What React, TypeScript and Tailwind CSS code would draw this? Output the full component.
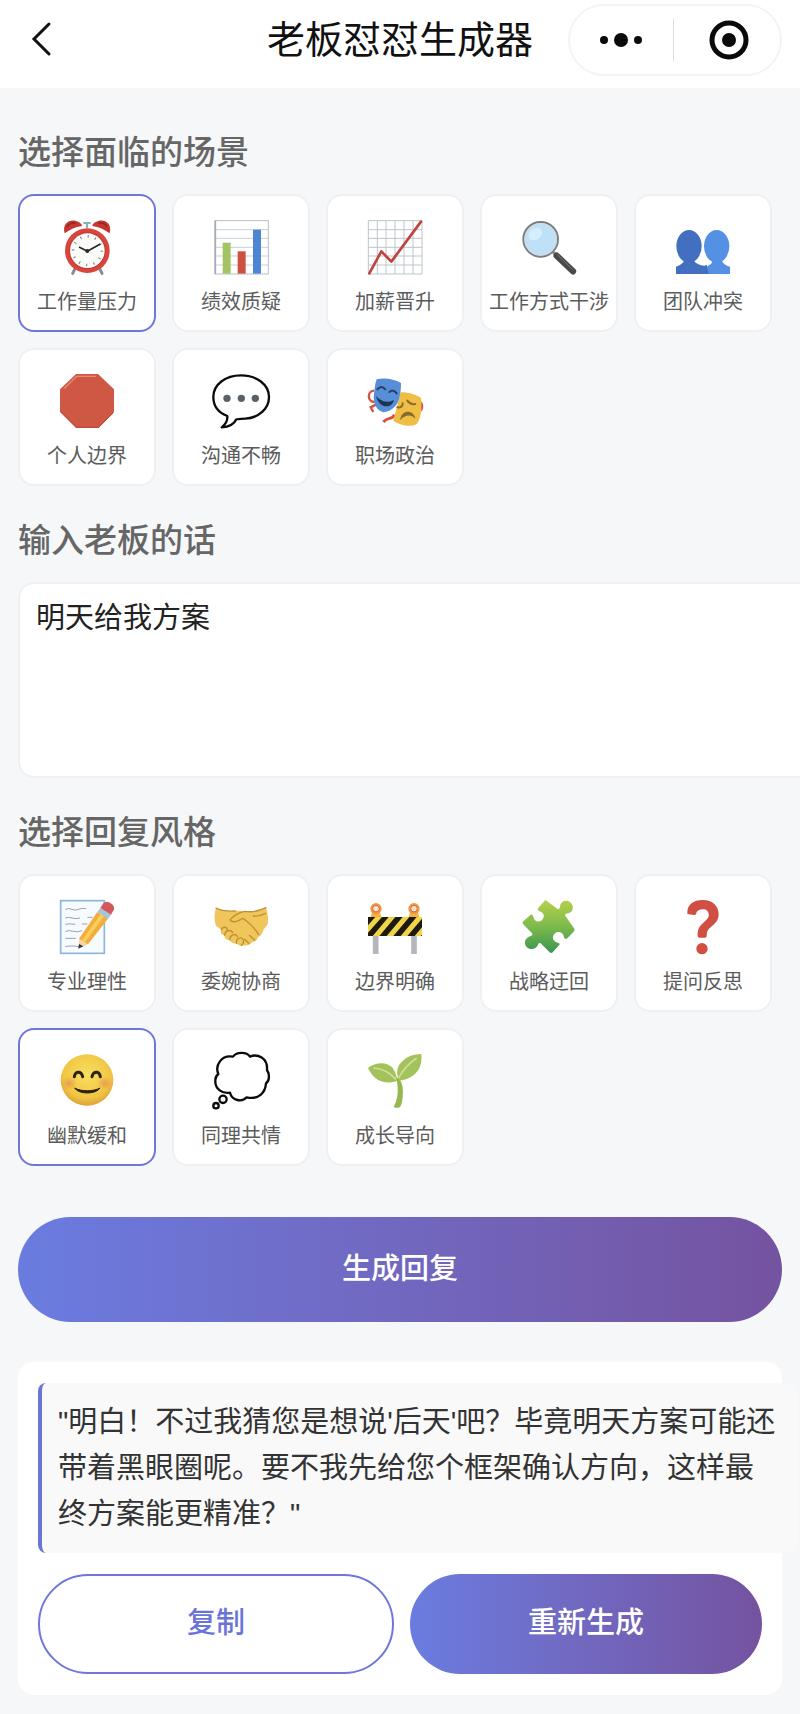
import React, { useState } from 'react';

const AlarmClock = () => (
  <>
    <path d="M47 142 L38 160 M117 142 L126 160" stroke="#7d909b" strokeWidth="9" strokeLinecap="round" />
    <path d="M70 9 H92 M81 9 V24" stroke="#7fb9ad" strokeWidth="6" />
    <path d="M14 40 C6 12 26 -2 46 2 C58 5 66 12 66 18 C46 20 30 29 14 40 Z" fill="#c8352e" />
    <path d="M149 40 C157 12 137 -2 117 2 C105 5 97 12 97 18 C117 20 133 29 149 40 Z" fill="#c8352e" />
    <path d="M22 22 C26 10 38 6 48 10" stroke="#8f2a2a" strokeWidth="5" fill="none" />
    <path d="M141 22 C137 10 125 6 115 10" stroke="#8f2a2a" strokeWidth="5" fill="none" />
    <circle cx="82" cy="92" r="67" fill="#d9453c" />
    <circle cx="82" cy="92" r="55" fill="#b93a33" />
    <circle cx="82" cy="92" r="52" fill="#fbfcfa" />
    <circle cx="82" cy="92" r="43" fill="none" stroke="#75807a" strokeWidth="8" strokeDasharray="3 19.5" />
    <path d="M57 81 L82 94 L121 72" stroke="#26292b" strokeWidth="5" fill="none" strokeLinejoin="round" />
    <circle cx="82" cy="93" r="6" fill="#26292b" />
  </>
);

const BarChart = () => (
  <>
    <rect x="3" y="2" width="160" height="160" fill="#fff" stroke="#b7bfc6" strokeWidth="3" />
    <path d="M3 29 H163 M3 55 H163 M3 82 H163 M3 108 H163 M3 135 H163" stroke="#c9d0d8" strokeWidth="3" />
    <path d="M4 2 V162" stroke="#a6adb3" strokeWidth="5" />
    <rect x="26" y="68" width="24" height="93" fill="#a3c465" />
    <rect x="71" y="94" width="24" height="67" fill="#cd5142" />
    <rect x="117" y="29" width="24" height="132" fill="#4b85d3" />
  </>
);

const RisingChart = () => (
  <>
    <path
      d="M1 2 V162 M28 2 V162 M54 2 V162 M81 2 V162 M108 2 V162 M135 2 V162 M162 2 V162 M1 2 H162 M1 29 H162 M1 55 H162 M1 82 H162 M1 108 H162 M1 135 H162 M1 162 H162"
      stroke="#bcc6cb"
      strokeWidth="3"
    />
    <path d="M4 160 L40 94 L70 125 L159 5" stroke="#bf4440" strokeWidth="8" fill="none" strokeLinejoin="round" strokeLinecap="round" />
  </>
);

const Magnifier = () => (
  <>
    <path d="M92 95 L106 109" stroke="#8a8f93" strokeWidth="9" />
    <path d="M104 107 L153 154" stroke="#4a4a4a" strokeWidth="19" strokeLinecap="round" />
    <path d="M106 104 L152 149" stroke="#777" strokeWidth="3" />
    <circle cx="56" cy="58" r="52" fill="#bfe1f8" stroke="#777f85" strokeWidth="6" />
    <circle cx="56" cy="58" r="47" fill="none" stroke="#d5dadd" strokeWidth="4" />
    <ellipse cx="40" cy="42" rx="22" ry="17" fill="#d6edfc" transform="rotate(-35 40 42)" />
  </>
);

const Busts = () => (
  <>
    <path d="M0 162 V140 Q20 132 24 122 H54 Q60 134 88 138 V162 Z" fill="#426fc0" />
    <ellipse cx="39" cy="79" rx="38" ry="49" fill="#426fc0" />
    <path d="M88 162 Q92 138 98 136 Q108 132 110 122 H138 Q142 134 162 140 V162 Z" fill="#5490e4" />
    <path d="M74 162 Q78 138 92 134 L98 162 Z" fill="#426fc0" />
    <ellipse cx="122" cy="79" rx="38" ry="49" fill="#5490e4" />
  </>
);

const StopSign = () => (
  <>
    <polygon points="48,0 114,0 162,46 162,114 116,162 48,162 0,114 0,46" fill="#cf5844" />
    <path d="M12 44 L50 7 H108" stroke="#e58c7c" strokeWidth="4" fill="none" />
    <path d="M3 114 L49 160 H116 L160 116" stroke="#b9493a" strokeWidth="3" fill="none" />
    <path d="M54 134 H108" stroke="#c0603f" strokeWidth="6" strokeDasharray="10 4" />
  </>
);

const Speech = () => (
  <>
    <path
      d="M81 4 C128 4 165 32 165 69 C165 106 132 132 94 134 C80 135 68 134 66 137 C60 151 44 158 23 160 C35 151 41 139 40 126 C14 116 -2 96 -2 69 C-2 32 34 4 81 4 Z"
      fill="#fff"
      stroke="#0b0b0b"
      strokeWidth="7"
      strokeLinejoin="round"
    />
    <circle cx="39" cy="73" r="11" fill="#596169" />
    <circle cx="82" cy="73" r="11" fill="#596169" />
    <circle cx="124" cy="73" r="11" fill="#596169" />
  </>
);

const Masks = () => (
  <>
    <path d="M18 50 C-4 52 -2 84 20 84 M24 92 L8 100 L16 114" stroke="#d8513f" strokeWidth="7" fill="none" />
    <path d="M150 82 C166 86 164 110 150 112 M80 122 C70 140 62 126 46 144" stroke="#d8513f" strokeWidth="9" fill="none" />
    <path d="M98 55 C120 54 146 62 159 72 C163 104 158 136 146 150 C128 162 92 152 76 140 Z" fill="#efbf45" />
    <path d="M118 80 q10 14 24 10 M88 100 q16 2 16 -12" stroke="#8d6c2b" strokeWidth="6" fill="none" strokeLinecap="round" />
    <path d="M96 138 C102 104 138 108 142 134 C128 120 112 122 96 138 Z" fill="#8a6a2c" />
    <path d="M26 16 C48 10 78 14 99 27 C99 56 94 88 80 98 C70 108 58 114 46 115 C26 108 14 90 18 60 C20 42 22 26 26 16 Z" fill="#568fd8" />
    <path d="M28 46 q12 -14 24 0 M64 54 q12 -10 22 4" stroke="#263e66" strokeWidth="6" fill="none" strokeLinecap="round" />
    <path d="M24 66 C38 84 62 88 78 78 C72 106 32 104 24 66 Z" fill="#1e3355" />
  </>
);

const Memo = () => (
  <>
    <rect x="2" y="2" width="131" height="158" fill="#f8fbfe" stroke="#8bb6de" strokeWidth="5" />
    <path
      d="M16 28 q10 -5 20 0 t20 0 t22 -2 M16 54 q10 -4 20 0 t24 0 M82 52 h16 M16 73 q12 -3 30 0 M66 72 h16 M16 94 q12 -4 24 0 t26 -2 M16 115 h32 M16 140 q14 -4 42 0"
      stroke="#93a3b4"
      strokeWidth="3"
      fill="none"
    />
    <path d="M57 116 L84 132 L56 145 Z" fill="#f3d6a0" />
    <path d="M57 132 L70 139 L55 146 Z" fill="#333" />
    <path d="M57 116 L112 36 L144 56 L84 133 Z" fill="#f2ad3d" />
    <path d="M66 121 L122 43 L132 49 L75 127 Z" fill="#f9cf5b" />
    <path d="M112 36 L121 24 L153 44 L144 57 Z" fill="#a6c6d8" />
    <path d="M121 24 L130 10 Q138 2 150 8 Q164 16 162 28 L153 44 Z" fill="#d6575b" />
  </>
);

const Handshake = () => (
  <>
    <path
      d="M6 24 C24 34 44 34 60 33 C76 31 84 32 96 35 C116 38 138 32 156 23 C162 40 164 60 160 74 L148 90 C144 102 140 108 132 112 C128 122 122 126 114 126 C108 136 98 138 88 136 C80 140 72 136 68 130 C58 132 50 128 48 120 C38 122 30 114 32 106 C22 106 18 98 22 90 L5 76 C0 58 1 40 6 24 Z"
      fill="#f0c65a"
    />
    <path
      d="M6 24 C24 34 44 34 64 33 M156 23 C138 32 116 38 92 34 C74 38 56 50 48 60 C56 70 74 64 86 55 C100 62 122 84 134 104 M118 48 C132 50 146 44 154 40 M22 90 C26 78 40 80 40 90 M32 106 C32 92 50 86 56 98 M48 120 C46 104 66 98 70 110 M68 130 C64 114 84 108 88 120 C90 128 86 134 82 136 M92 118 L104 130 M106 106 L122 120"
      stroke="#bd9038"
      strokeWidth="4"
      fill="none"
      strokeLinecap="round"
    />
  </>
);

const Barrier = () => (
  <>
    <path d="M23 106 V162 M138 106 V162" stroke="#b4b6bb" strokeWidth="17" />
    <path d="M8 52 L12 36 H36 L40 52 Z M122 52 L126 36 H150 L154 52 Z" fill="#f4b340" />
    <circle cx="24" cy="26" r="17" fill="#ee9a3f" />
    <circle cx="24" cy="26" r="10" fill="#fbe0c8" stroke="#d9603b" strokeWidth="3" />
    <circle cx="138" cy="26" r="17" fill="#ee9a3f" />
    <circle cx="138" cy="26" r="10" fill="#fbe0c8" stroke="#d9603b" strokeWidth="3" />
    <rect x="0" y="51" width="162" height="57" fill="#1d1a12" />
    <path d="M0 76 L22 51 H42 L0 98 Z M14 108 L62 51 H82 L34 108 Z M56 108 L104 51 H124 L76 108 Z M98 108 L146 51 H162 V56 L118 108 Z M140 108 L162 82 V104 L158 108 Z" fill="#f0d548" />
  </>
);

const Puzzle = () => (
  <>
    <defs>
      <linearGradient id="puzzle" x1="0" y1="0" x2="0" y2="1">
        <stop offset="0" stopColor="#b6d04c" />
        <stop offset="0.5" stopColor="#7cba4c" />
        <stop offset="1" stopColor="#399650" />
      </linearGradient>
    </defs>
    <path
      d="M70 0 L106 26 Q112 30 114 20 C116 2 134 -2 144 6 C158 16 154 38 138 40 C128 42 128 44 132 50 L157 86 Q160 92 154 96 L136 115 Q130 120 126 112 C124 96 108 92 99 100 C88 110 92 126 108 128 Q116 130 111 136 L92 157 Q88 161 83 157 L56 130 Q50 126 48 134 C42 150 22 150 13 140 C4 128 10 112 26 108 Q34 106 30 100 L3 72 Q0 68 4 64 L26 44 Q32 42 34 50 C38 66 50 68 60 60 C70 50 66 38 52 34 Q44 30 49 24 Z"
      fill="url(#puzzle)"
    />
  </>
);

const Question = () => (
  <>
    <path
      d="M34 42 C32 14 52 0 80 0 C110 0 128 18 128 43 C128 62 116 72 104 82 C94 91 92 97 92 108 Q92 113 87 113 H70 Q65 113 65 108 C64 90 68 80 82 68 C94 58 100 52 98 42 C96 30 88 27 78 28 C67 29 62 34 60 42 Q58 46 54 45 Z"
      fill="#d04e42"
    />
    <circle cx="78" cy="146" r="17" fill="#d04e42" />
  </>
);

const Smile = () => (
  <>
    <defs>
      <radialGradient id="face" cx="0.5" cy="0.4" r="0.6">
        <stop offset="0" stopColor="#f9df5e" />
        <stop offset="0.75" stopColor="#f0c644" />
        <stop offset="1" stopColor="#dfa338" />
      </radialGradient>
      <radialGradient id="cheek">
        <stop offset="0" stopColor="#e88a50" stopOpacity="0.7" />
        <stop offset="1" stopColor="#e88a50" stopOpacity="0" />
      </radialGradient>
    </defs>
    <ellipse cx="81" cy="78" rx="79" ry="77" fill="url(#face)" />
    <ellipse cx="27" cy="88" rx="24" ry="20" fill="url(#cheek)" />
    <ellipse cx="135" cy="88" rx="24" ry="20" fill="url(#cheek)" />
    <path d="M43 68 C46 50 64 50 68 68 M96 68 C100 50 118 50 121 68" stroke="#2d2110" strokeWidth="9" fill="none" strokeLinecap="round" />
    <path d="M44 102 C64 113 100 113 120 102 C108 122 56 122 44 102 Z" fill="#2d2110" stroke="#2d2110" strokeWidth="3" strokeLinejoin="round" />
  </>
);

const Thought = () => (
  <g fill="#fff" stroke="#0b0b0b" strokeWidth="7" strokeLinejoin="round">
    <path d="M57 8 C68 -7 98 -7 108 8 C130 -2 162 12 159 48 C168 62 166 82 156 88 C154 116 134 138 98 130 C84 146 54 140 48 116 C26 120 2 106 4 78 C4 70 8 64 13 60 C2 34 22 2 57 8 Z" />
    <circle cx="27" cy="136" r="11" />
    <circle cx="6" cy="155" r="8" />
  </g>
);

const Seedling = () => (
  <>
    <path d="M84 70 C100 74 108 98 104 130 C103 146 99 156 95 160 Q84 164 77 158 C92 134 92 100 84 70 Z" fill="#97b850" />
    <path d="M0 42 C22 24 58 22 74 42 C82 54 86 66 88 80 C58 92 20 86 0 42 Z" fill="#a3c25b" />
    <path d="M160 0 C164 36 148 74 92 80 C86 60 86 44 94 32 C108 12 132 0 160 0 Z" fill="#a3c25b" />
    <path d="M16 42 C44 44 66 56 84 76 M146 12 C126 26 104 48 92 72" stroke="#cfdf98" strokeWidth="5" fill="none" />
  </>
);

const scenes = [
  { name: '工作量压力', icon: AlarmClock },
  { name: '绩效质疑', icon: BarChart },
  { name: '加薪晋升', icon: RisingChart },
  { name: '工作方式干涉', icon: Magnifier },
  { name: '团队冲突', icon: Busts },
  { name: '个人边界', icon: StopSign },
  { name: '沟通不畅', icon: Speech },
  { name: '职场政治', icon: Masks },
];

const replyStyles = [
  { name: '专业理性', icon: Memo },
  { name: '委婉协商', icon: Handshake },
  { name: '边界明确', icon: Barrier },
  { name: '战略迂回', icon: Puzzle },
  { name: '提问反思', icon: Question },
  { name: '幽默缓和', icon: Smile },
  { name: '同理共情', icon: Thought },
  { name: '成长导向', icon: Seedling },
];

type Option = { name: string; icon: React.FC };

const OptionGrid = ({ options, selected, onSelect }: { options: Option[]; selected: string; onSelect: (name: string) => void }) => (
  <div className="grid grid-cols-5 gap-4 mr-[10px]">
    {options.map((option) => (
      <button
        key={option.name}
        type="button"
        aria-pressed={selected === option.name}
        onClick={() => onSelect(option.name)}
        className={`aspect-square flex flex-col items-center gap-[14px] pt-6 rounded-2xl border-2 bg-white ${
          selected === option.name ? 'border-[#6f78da]' : 'border-[#eef0f3]'
        }`}
      >
        <svg viewBox="0 0 162 162" className="w-[54px] h-[54px] shrink-0 overflow-visible" aria-hidden="true">
          <option.icon />
        </svg>
        <span className="text-[20px] leading-7 text-[#5c5c5c] whitespace-nowrap">{option.name}</span>
      </button>
    ))}
  </div>
);

const App = () => {
  const [scene, setScene] = useState('工作量压力');
  const [replyStyle, setReplyStyle] = useState('幽默缓和');
  const [words, setWords] = useState('明天给我方案');

  return (
    <div className="min-h-screen overflow-x-hidden bg-[#f5f7f9] font-['Liberation_Sans','Noto_Sans_CJK_SC',sans-serif]">
      {/* Navigation bar */}
      <header className="grid grid-cols-[1fr_auto_1fr] items-center h-[88px] px-[18px] pb-2 bg-white">
        <button type="button" aria-label="返回" className="w-10 h-12 flex items-center justify-center">
          <svg width="40" height="48" viewBox="0 0 40 48" fill="none" stroke="#111" strokeWidth="3" strokeLinecap="round">
            <path d="M31 8 L16 23 L31 38" />
          </svg>
        </button>
        <h1 className="text-[38px] leading-[48px] text-[#111]">老板怼怼生成器</h1>
        <div className="justify-self-end flex items-center w-[214px] h-[72px] rounded-full border-2 border-[#f4f4f4]">
          <button type="button" aria-label="更多" className="flex-1 flex justify-center">
            <svg width="44" height="16" viewBox="0 0 44 16" fill="#0a0a0a">
              <circle cx="5" cy="8" r="4" />
              <circle cx="22" cy="8" r="7" />
              <circle cx="39" cy="8" r="4" />
            </svg>
          </button>
          <span className="w-px h-[42px] bg-[#dcdcdc]" />
          <button type="button" aria-label="关闭" className="flex-1 flex justify-center pl-1">
            <svg width="40" height="40" viewBox="0 0 40 40">
              <circle cx="20" cy="20" r="17" fill="none" stroke="#0a0a0a" strokeWidth="5" />
              <circle cx="20" cy="20" r="7" fill="#0a0a0a" />
            </svg>
          </button>
        </div>
      </header>

      <main className="px-[18px] pt-[45px] pb-5">
        <section className="mb-[35px]">
          <h2 className="mb-[21px] text-[33px] leading-10 font-medium text-[#666]">选择面临的场景</h2>
          <OptionGrid options={scenes} selected={scene} onSelect={setScene} />
        </section>

        <section className="mb-[35px]">
          <label htmlFor="words" className="block mb-[21px] text-[33px] leading-10 font-medium text-[#666]">
            输入老板的话
          </label>
          <textarea
            id="words"
            value={words}
            onChange={(e) => setWords(e.target.value)}
            className="block w-[calc(100%+36px)] h-[196px] px-4 py-4 resize-none rounded-2xl border-2 border-[#eef0f3] bg-white text-[29px] leading-9 text-[#222] outline-none"
          />
        </section>

        <section className="mb-[51px]">
          <h2 className="mb-[21px] text-[33px] leading-10 font-medium text-[#666]">选择回复风格</h2>
          <OptionGrid options={replyStyles} selected={replyStyle} onSelect={setReplyStyle} />
        </section>

        <button
          type="button"
          className="block w-full h-[105px] mb-10 rounded-full bg-linear-to-r from-[#6a7ce0] to-[#7453a0] text-[29px] font-medium text-white"
        >
          生成回复
        </button>

        {/* Generated reply */}
        <section className="px-5 py-[21px] rounded-2xl bg-white">
          <p className="w-[calc(100%+36px)] mb-[21px] p-4 rounded-lg border-l-4 border-[#6a76d6] bg-[#f9f9f9] text-[29px] leading-[46px] text-[#333]">
            "明白！不过我猜您是想说'后天'吧？毕竟明天方案可能还带着黑眼圈呢。要不我先给您个框架确认方向，这样最终方案能更精准？"
          </p>
          <div className="flex gap-4 h-[100px]">
            <button type="button" className="flex-1 rounded-full border-2 border-[#6f78da] bg-white text-[29px] font-medium text-[#6a74d8]">
              复制
            </button>
            <button type="button" className="flex-1 rounded-full bg-linear-to-r from-[#6a7ce0] to-[#7453a0] text-[29px] font-medium text-white">
              重新生成
            </button>
          </div>
        </section>
      </main>
    </div>
  );
};

export default App;
